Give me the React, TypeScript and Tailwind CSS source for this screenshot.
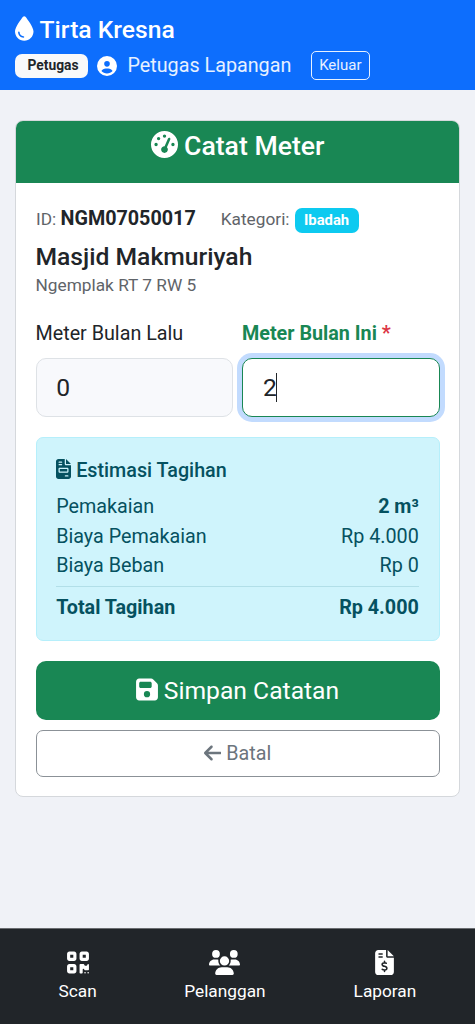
import type { ReactNode } from "react";
import {
  FaArrowLeft,
  FaCircleUser,
  FaDroplet,
  FaFileInvoice,
  FaFileInvoiceDollar,
  FaFloppyDisk,
  FaGaugeHigh,
  FaQrcode,
  FaUsers,
} from "react-icons/fa6";

function BillRow({ label, value, bold }: { label: string; value: string; bold?: boolean }) {
  return (
    <div className="flex h-[29.6px] items-center justify-between">
      <span>{label}</span>
      <span className={bold ? "font-bold" : ""}>{value}</span>
    </div>
  );
}

function NavItem({ icon, label }: { icon: ReactNode; label: string }) {
  return (
    <a className="flex flex-col items-center text-[17.27px] leading-[26px]">
      <span className="flex h-[30px] items-center">{icon}</span>
      <span>{label}</span>
    </a>
  );
}

export default function App() {
  return (
    <div className="flex h-[1024px] w-[475px] flex-col overflow-hidden bg-[#f0f2f7] font-[Roboto,sans-serif] text-[19.74px] leading-[29.6px] text-[#212529]">
      <header className="h-[90px] shrink-0 bg-[#0d6efd] pl-[15px] pt-[12px] text-white">
        <div className="flex h-[35px] items-center text-[24.67px] font-medium">
          <FaDroplet className="-mt-[2px] mr-[6px] h-[25px] w-[18.5px]" />
          <span>Tirta Kresna</span>
        </div>
        <div className="mt-[4px] flex h-[29px] items-center">
          <span className="flex h-[24px] w-[73px] items-center justify-end rounded-[7px] bg-[#f8f9fa] pr-[9.5px] text-[13.8px] font-bold text-[#212529]">
            Petugas
          </span>
          <FaCircleUser className="ml-[9px] size-[20px]" />
          <span className="ml-[10.5px] text-white/90">Petugas Lapangan</span>
          <button className="ml-[19.5px] flex h-[29px] w-[59px] items-center justify-center rounded-[5px] border border-white/90 text-[15px] text-white/90">
            Keluar
          </button>
        </div>
      </header>

      <main className="mx-[15px] mt-[30px] flex h-[677px] flex-col overflow-hidden rounded-[8px] border border-[#d5d8dc] bg-white">
        <div className="flex h-[62px] shrink-0 items-start justify-center bg-[#198754] pt-[9px] text-[26.6px] font-medium leading-[32px] text-white">
          <FaGaugeHigh className="mr-[6.5px] mt-[1px] size-[27px]" />
          <span>Catat Meter</span>
        </div>
        <div className="flex flex-col px-[19.5px] pt-[22px]">
          <div className="flex h-[29px] items-center pl-[0.5px] text-[17.27px] text-[#5f6469]">
            <span>
              ID: <b className="text-[19.74px] text-[#212529]">NGM07050017</b>
            </span>
            <span className="ml-[25px]">Kategori:</span>
            <span className="ml-[5px] mt-[2px] flex h-[25px] w-[64px] items-center justify-center rounded-[7px] bg-[#0dcaf0] pt-px text-[14.8px] font-bold text-white">
              Ibadah
            </span>
          </div>
          <h1 className="mt-[7px] text-[24.67px] font-medium leading-[31px]">Masjid Makmuriyah</h1>
          <p className="text-[17.27px] leading-[26px] text-[#5f6469]">Ngemplak RT 7 RW 5</p>

          <div className="mt-[21px] grid grid-cols-2 gap-[9px]">
            <div>
              <label className="block">Meter Bulan Lalu</label>
              <div className="mt-[9.4px] flex h-[59px] items-center rounded-[10px] border border-[#dee2e6] bg-[#f8f9fc] pl-[19.7px] pt-px text-[24.67px]">
                0
              </div>
            </div>
            <div>
              <label className="block font-bold text-[#198754]">
                Meter Bulan Ini <span className="text-[#dc3545]">*</span>
              </label>
              <div className="mt-[9.4px] flex h-[59px] items-center rounded-[10px] border border-[#198754] bg-white pl-[20px] pt-px text-[24.67px] shadow-[0_0_0_5px_#c2dbfe]">
                2<span className="-ml-px h-[29px] w-px bg-[#212529]" />
              </div>
            </div>
          </div>

          <section className="mt-[20px] h-[204px] rounded-[7px] border border-[#b6effb] bg-[#cff4fc] px-[19.7px] pt-[20px] text-[#055160]">
            <h2 className="mb-[9px] flex h-[25px] items-center font-medium">
              <FaFileInvoice className="-mt-[2px] mr-[5px] h-[20px] w-[15px]" />
              Estimasi Tagihan
            </h2>
            <BillRow label="Pemakaian" value="2 m³" bold />
            <BillRow label="Biaya Pemakaian" value="Rp 4.000" />
            <BillRow label="Biaya Beban" value="Rp 0" />
            <hr className="mb-[6px] mt-[5px] border-[#b2dfe8]" />
            <div className="font-bold">
              <BillRow label="Total Tagihan" value="Rp 4.000" bold />
            </div>
          </section>

          <button className="mt-[20px] flex h-[59px] items-center justify-center rounded-[10px] bg-[#198754] pt-px text-[24.67px] text-white">
            <FaFloppyDisk className="-mt-[2px] mr-[6px] h-[25px] w-[22px]" />
            Simpan Catatan
          </button>
          <button className="mt-[10px] flex h-[47px] items-center justify-center rounded-[7px] border border-[#8b9197] pt-px text-[#6c757d]">
            <FaArrowLeft className="-mt-[2px] mr-[5px] h-[20px] w-[17.5px]" />
            Batal
          </button>
        </div>
      </main>

      <nav className="mt-auto flex h-[96px] shrink-0 items-start border-t border-[#6a6d71] bg-[#212529] pl-[58.5px] pt-[19px] text-white">
        <NavItem icon={<FaQrcode className="-mt-[2px] h-[25px] w-[22px]" />} label="Scan" />
        <div className="ml-[87.5px]">
          <NavItem icon={<FaUsers className="-mt-px h-[25px] w-[31px]" />} label="Pelanggan" />
        </div>
        <div className="ml-[88px]">
          <NavItem icon={<FaFileInvoiceDollar className="-mt-px h-[25px] w-[19px]" />} label="Laporan" />
        </div>
      </nav>
    </div>
  );
}
